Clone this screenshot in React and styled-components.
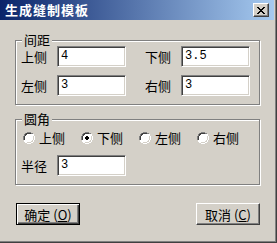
import styled, { createGlobalStyle } from 'styled-components';

const GlobalStyle = createGlobalStyle`
    body {
        margin: 0;
        font-family: "Noto Sans CJK SC", "Liberation Sans", sans-serif;
        font-size: 13px;
    }
`

const Window = styled.div`
    width: 277px;
    height: 243px;
    box-sizing: border-box;
    background: #d4d0c8;
    border-right: 1px solid #404040;
    border-bottom: 1px solid #404040;
    box-shadow: inset -1px -1px 0 #808080;
    display: flex;
    flex-direction: column;
    color: #000;
`

const TitleBar = styled.div`
    height: 20px;
    margin-right: 2px;
    background: linear-gradient(to right, #0a246a, #a6caf0);
    display: flex;
    align-items: center;
    justify-content: space-between;
    padding: 0 5px 0 5px;
`

const Title = styled.span`
    color: #fff;
    font-weight: bold;
    font-size: 13px;
    letter-spacing: 1px;
    line-height: 20px;
`

const CloseButton = styled.div`
    width: 16px;
    height: 14px;
    box-sizing: border-box;
    background: #d4d0c8;
    border-top: 1px solid #fff;
    border-left: 1px solid #fff;
    border-right: 1px solid #404040;
    border-bottom: 1px solid #404040;
    box-shadow: inset -1px -1px 0 #808080;
    display: flex;
    align-items: center;
    justify-content: center;
`

const Group = styled.div`
    position: relative;
    margin: ${props => props.top}px 16px 0 15px;
    border: 1px solid #808080;
    box-shadow: inset 1px 1px 0 #fff, 1px 1px 0 #fff;
    padding: ${props => props.pad};
    display: flex;
    flex-direction: column;
    gap: ${props => props.gap}px;
`

const Legend = styled.span`
    position: absolute;
    top: -9px;
    left: 6px;
    padding: 0 2px;
    background: #d4d0c8;
    line-height: 16px;
`

const Row = styled.div`
    display: flex;
    gap: 19px;
`

const Field = styled.div`
    display: flex;
    align-items: center;
`

const Label = styled.span`
    width: 36px;
    line-height: 21px;
`

const Input = styled.div`
    width: 69px;
    height: 21px;
    box-sizing: border-box;
    background: #fff;
    border-top: 1px solid #808080;
    border-left: 1px solid #808080;
    border-right: 1px solid #fff;
    border-bottom: 1px solid #fff;
    box-shadow: inset 1px 1px 0 #404040, inset -1px -1px 0 #d4d0c8;
    padding: 0 3px;
    font-family: "Liberation Mono", monospace;
    font-size: 12px;
    line-height: 19px;
`

const RadioRow = styled.div`
    display: flex;
    gap: 16px;
    height: 16px;
    padding-left: 2px;
`

const RadioItem = styled.label`
    display: flex;
    align-items: center;
    gap: 4px;
    line-height: 16px;
`

const Footer = styled.div`
    display: flex;
    justify-content: space-between;
    margin-top: 18px;
    padding: 0 16px 0 16px;
`

const Button = styled.div`
    width: 64px;
    height: 22px;
    box-sizing: border-box;
    display: flex;
    align-items: center;
    justify-content: center;
    background: #d4d0c8;
    border: 1px solid ${props => props.primary ? '#000' : 'transparent'};
    box-shadow: ${props => props.primary
        ? 'inset 1px 1px 0 #fff, inset -1px -1px 0 #404040, inset -2px -2px 0 #808080'
        : 'inset 1px 1px 0 #fff, inset -1px -1px 0 #404040, inset -2px -2px 0 #808080'};
    ${props => !props.primary && 'border-top-color: #fff; border-left-color: #fff; border-right-color: #404040; border-bottom-color: #404040; box-shadow: inset -1px -1px 0 #808080;'}
    font-size: 13px;
`

const Key = styled.span`
    text-decoration: underline;
`

const Radio = ({ checked }) => (
    <svg width="12" height="12" viewBox="0 0 12 12">
        <path d="M4 0h4v1h2v1h1v2h1v4h-1v2h-1v1h-2v1h-4v-1h-2v-1h-1v-2h-1v-4h1v-2h1v-1h2z" fill="#fff" />
        <path d="M4 0h4v1h2v1h-2v-1h-4v1h-2v2h-1v4h-1v-4h1v-2h1v-1h2z" fill="#808080" />
        <path d="M4 1h4v1h-4v1h-1v1h-1v4h-1v-4h1v-2h1v-1h0z M2 2h1v1h-1z" fill="#404040" />
        <path d="M10 2h1v2h1v4h-1v2h-1v1h-2v1h-4v-1h4v-1h2v-2h1v-4h-1z" fill="#fff" />
        <path d="M10 3h0v1h1v4h-1v2h-2v1h-4v-1h4v-1h1v-1h1v-4z" fill="#d4d0c8" />
        {checked && <path d="M5 4h2v1h1v2h-1v1h-2v-1h-1v-2h1z" fill="#000" />}
    </svg>
)

const App = () => {
    return (
        <>
            <GlobalStyle />
            <Window>
                <TitleBar>
                    <Title>生成缝制模板</Title>
                    <CloseButton>
                        <svg width="8" height="7" viewBox="0 0 8 7">
                            <path d="M0 0h2v1h1v1h2v-1h1v-1h2v1h-1v1h-1v1h-1v1h1v1h1v1h1v1h-2v-1h-1v-1h-2v1h-1v1h-2v-1h1v-1h1v-1h1v-1h-1v-1h-1v-1h-1z" fill="#000" />
                        </svg>
                    </CloseButton>
                </TitleBar>
                <Group top={20} pad="5px 4px 8px 5px" gap={8}>
                    <Legend>间距</Legend>
                    <Row>
                        <Field><Label>上侧</Label><Input>4</Input></Field>
                        <Field><Label>下侧</Label><Input>3.5</Input></Field>
                    </Row>
                    <Row>
                        <Field><Label>左侧</Label><Input>3</Input></Field>
                        <Field><Label>右侧</Label><Input>3</Input></Field>
                    </Row>
                </Group>
                <Group top={14} pad="10px 4px 8px 5px" gap={9}>
                    <Legend>圆角</Legend>
                    <RadioRow>
                        <RadioItem><Radio />上侧</RadioItem>
                        <RadioItem><Radio checked />下侧</RadioItem>
                        <RadioItem><Radio />左侧</RadioItem>
                        <RadioItem><Radio />右侧</RadioItem>
                    </RadioRow>
                    <Row>
                        <Field><Label>半径</Label><Input>3</Input></Field>
                    </Row>
                </Group>
                <Footer>
                    <Button primary>确定 (<Key>O</Key>)</Button>
                    <Button>取消 (<Key>C</Key>)</Button>
                </Footer>
            </Window>
        </>
    )
}

export default App
